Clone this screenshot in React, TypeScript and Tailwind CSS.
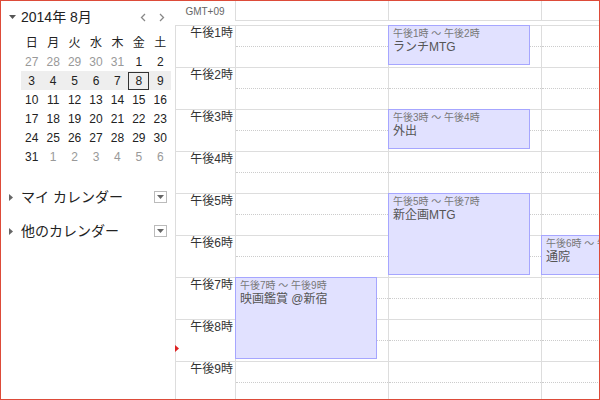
import React from "react";

const FONT = { fontFamily: '"Liberation Sans", "Noto Sans CJK JP", sans-serif' };

const weekdays = ["日", "月", "火", "水", "木", "金", "土"];

// mini calendar rows, [day, inMonth]
const weeks: [number, boolean][][] = [
	[[27, false], [28, false], [29, false], [30, false], [31, false], [1, true], [2, true]],
	[[3, true], [4, true], [5, true], [6, true], [7, true], [8, true], [9, true]],
	[[10, true], [11, true], [12, true], [13, true], [14, true], [15, true], [16, true]],
	[[17, true], [18, true], [19, true], [20, true], [21, true], [22, true], [23, true]],
	[[24, true], [25, true], [26, true], [27, true], [28, true], [29, true], [30, true]],
	[[31, true], [1, false], [2, false], [3, false], [4, false], [5, false], [6, false]],
];

const hours = [1, 2, 3, 4, 5, 6, 7, 8, 9];

type Ev = { col: number; start: number; len: number; time: string; title: string };

const events: Ev[] = [
	{ col: 1, start: 1, len: 1, time: "午後1時 ～ 午後2時", title: "ランチMTG" },
	{ col: 1, start: 3, len: 1, time: "午後3時 ～ 午後4時", title: "外出" },
	{ col: 1, start: 5, len: 2, time: "午後5時 ～ 午後7時", title: "新企画MTG" },
	{ col: 2, start: 6, len: 1, time: "午後6時 ～ 午後7時", title: "通院" },
	{ col: 0, start: 7, len: 2, time: "午後7時 ～ 午後9時", title: "映画鑑賞 @新宿" },
];

function SmallDown() {
	return (
		<svg width="7" height="4" viewBox="0 0 7 4">
			<path d="M0 0 L7 0 L3.5 4 Z" fill="#555" />
		</svg>
	);
}

function SmallRight() {
	return (
		<svg width="4" height="7" viewBox="0 0 4 7">
			<path d="M0 0 L4 3.5 L0 7 Z" fill="#666" />
		</svg>
	);
}

function CalSection({ label }: { label: string }) {
	return (
		<div className="h-[34px] flex items-center pl-[8px] pr-[8px]">
			<SmallRight />
			<span className="ml-[8px] text-[14px] text-[#222]">{label}</span>
			<div className="ml-auto w-[13px] h-[12px] border border-[#bbb] bg-white flex items-center justify-center">
				<svg width="7" height="4" viewBox="0 0 7 4">
					<path d="M0 0 L7 0 L3.5 4 Z" fill="#666" />
				</svg>
			</div>
		</div>
	);
}

function Sidebar() {
	return (
		<div className="w-[174px] shrink-0 flex flex-col">
			<div className="h-[32px] flex items-center pl-[8px] pr-[10px]">
				<SmallDown />
				<span className="ml-[5px] text-[14px] text-[#222]">2014年 8月</span>
				<div className="ml-auto flex items-center gap-[13px]">
					<svg width="6" height="9" viewBox="0 0 6 9">
						<path d="M5 1 L1.5 4.5 L5 8" fill="none" stroke="#888" strokeWidth="1.3" />
					</svg>
					<svg width="6" height="9" viewBox="0 0 6 9">
						<path d="M1 1 L4.5 4.5 L1 8" fill="none" stroke="#888" strokeWidth="1.3" />
					</svg>
				</div>
			</div>
			<div className="ml-[20px] w-[150px] text-[12px]">
				<div className="grid grid-cols-7 h-[19px] items-center text-[#222]">
					{weekdays.map((d) => (
						<span key={d} className="text-center">
							{d}
						</span>
					))}
				</div>
				{weeks.map((w, i) => (
					<div key={i} className={"grid grid-cols-7 h-[19px] items-center " + (i === 1 ? "bg-[#eee]" : "")}>
						{w.map(([d, inMonth], j) => (
							<div key={j} className="flex items-center justify-center">
								{i === 1 && d === 8 ? (
									<span className="w-[21px] h-[18px] border border-[#333] flex items-center justify-center text-[#222]">
										{d}
									</span>
								) : (
									<span className={inMonth ? "text-[#222]" : "text-[#999]"}>{d}</span>
								)}
							</div>
						))}
					</div>
				))}
			</div>
			<div className="mt-[14px]">
				<CalSection label="マイ カレンダー" />
				<CalSection label="他のカレンダー" />
			</div>
		</div>
	);
}

function DayColumn({ idx }: { idx: number }) {
	return (
		<div className="relative w-[153px] shrink-0 border-r border-[#ddd]">
			{hours.map((h) => (
				<div key={h} className="h-[42px] border-b border-[#ddd]">
					<div className="h-[21px] border-b border-dotted border-[#ccc]" />
				</div>
			))}
			{events
				.filter((e) => e.col === idx)
				.map((e) => (
					<div
						key={e.title}
						className="absolute left-[-1px] w-[142px] bg-[#e1e1ff] border border-[#a6a6ff] pl-[4px] pt-[1px] overflow-hidden whitespace-nowrap"
						style={{ top: -1 + 42 * (e.start - 1), height: 42 * e.len - 2 }}
					>
						<div className="text-[10px] leading-[14px] text-[#777]">{e.time}</div>
						<div className="text-[12px] leading-[13px] text-[#555]">{e.title}</div>
					</div>
				))}
		</div>
	);
}

export default function App() {
	return (
		<div className="w-[600px] h-[400px] border border-[#dd4b39] flex overflow-hidden bg-white" style={FONT}>
			<Sidebar />
			<div className="relative flex-1 overflow-hidden">
				<div className="flex h-[20px]">
					<div className="w-[60px] shrink-0 flex items-center justify-center text-[10px] text-[#666]">GMT+09</div>
					{[0, 1, 2].map((i) => (
						<div key={i} className="w-[153px] shrink-0 border-l border-b border-[#ddd]" />
					))}
				</div>
				<div className="mt-[4px] flex border-t border-[#ddd] w-max">
					<div className="w-[61px] shrink-0 border-l border-r border-[#ddd]">
						{hours.map((h) => (
							<div key={h} className="h-[42px] border-b border-[#ddd] text-right pr-[2px] text-[12px] leading-[14px] text-[#333]">
								午後{h}時
							</div>
						))}
					</div>
					<DayColumn idx={0} />
					<DayColumn idx={1} />
					<DayColumn idx={2} />
				</div>
				<svg className="absolute left-0 top-[344px]" width="4" height="7" viewBox="0 0 4 7">
					<path d="M0 0 L4 3.5 L0 7 Z" fill="#d22" />
				</svg>
			</div>
		</div>
	);
}
